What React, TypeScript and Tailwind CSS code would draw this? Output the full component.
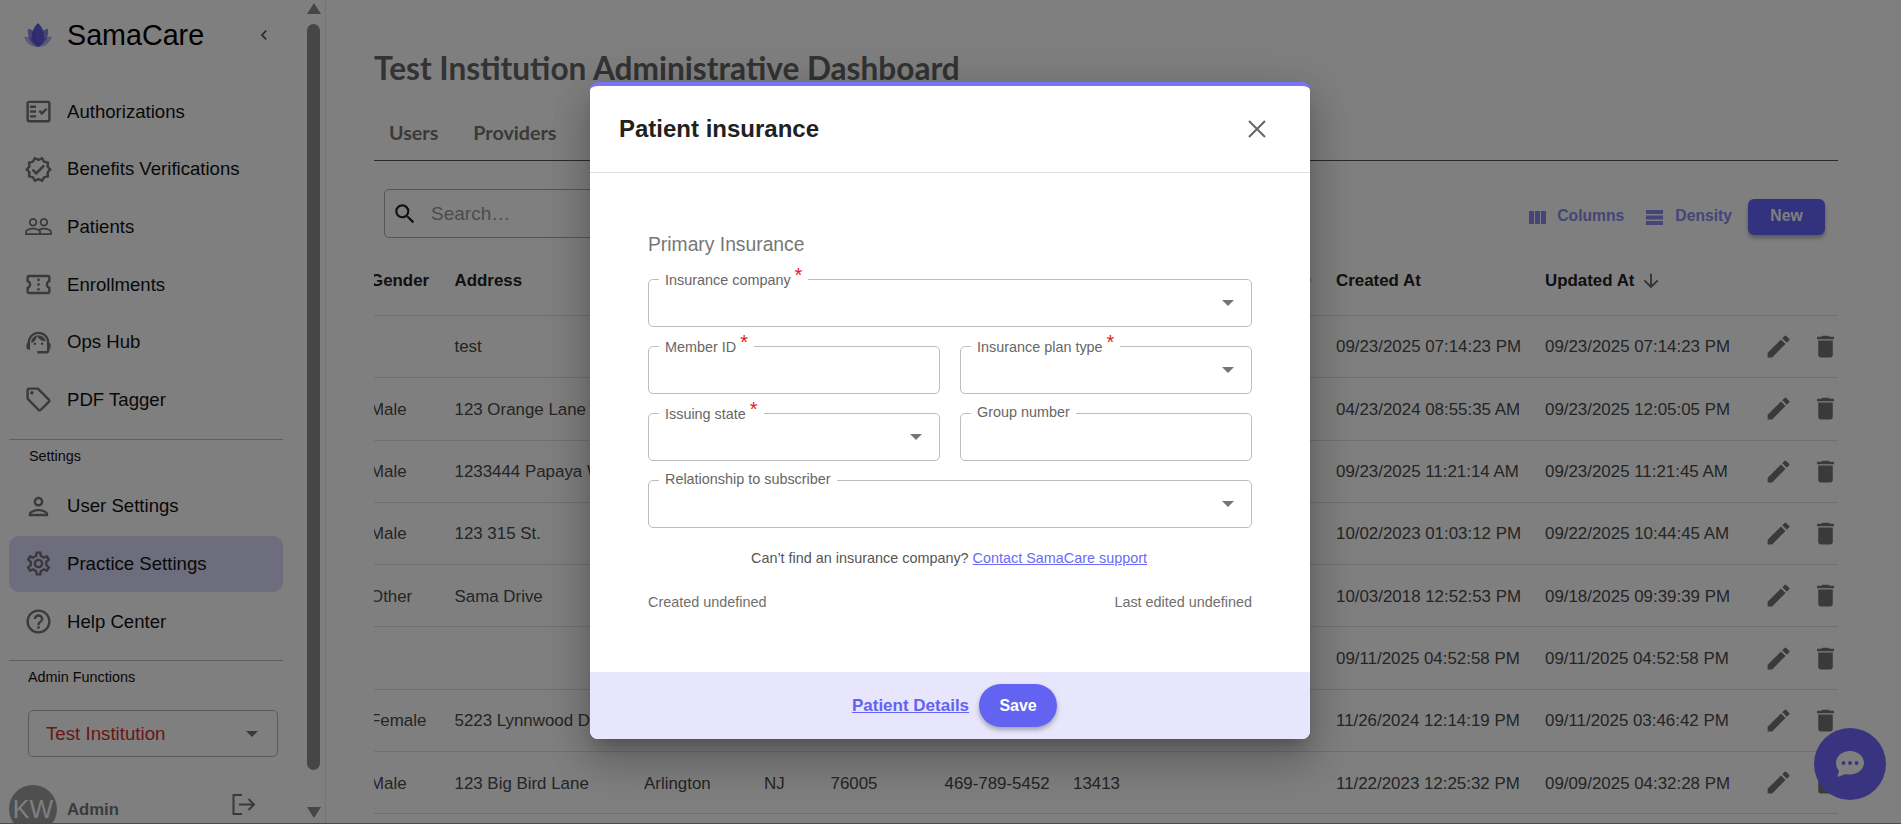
import { type ReactNode } from 'react'
import {
  MdArrowDownward,
  MdChevronLeft,
  MdDelete,
  MdEdit,
  MdHelpOutline,
  MdOutlineConfirmationNumber,
  MdOutlineFactCheck,
  MdOutlineLocalOffer,
  MdOutlinePerson,
  MdOutlineSettings,
  MdOutlineSupportAgent,
  MdOutlineVerified,
  MdPeopleOutline,
  MdSearch,
} from 'react-icons/md'

const tableCols = 'grid grid-cols-[84.5px_189.5px_120px_66.5px_114px_128.5px_263px_209px_219px_78px]'

const rows = [
  { gender: '', address: 'test', created: '09/23/2025 07:14:23 PM', updated: '09/23/2025 07:14:23 PM' },
  { gender: 'Male', address: '123 Orange Lane', created: '04/23/2024 08:55:35 AM', updated: '09/23/2025 12:05:05 PM' },
  { gender: 'Male', address: '1233444 Papaya Way', created: '09/23/2025 11:21:14 AM', updated: '09/23/2025 11:21:45 AM' },
  { gender: 'Male', address: '123 315 St.', created: '10/02/2023 01:03:12 PM', updated: '09/22/2025 10:44:45 AM' },
  { gender: 'Other', address: 'Sama Drive', created: '10/03/2018 12:52:53 PM', updated: '09/18/2025 09:39:39 PM' },
  { gender: '', address: '', created: '09/11/2025 04:52:58 PM', updated: '09/11/2025 04:52:58 PM' },
  { gender: 'Female', address: '5223 Lynnwood Dr', created: '11/26/2024 12:14:19 PM', updated: '09/11/2025 03:46:42 PM' },
  {
    gender: 'Male',
    address: '123 Big Bird Lane',
    city: 'Arlington',
    state: 'NJ',
    zip: '76005',
    phone: '469-789-5452',
    npi: '13413',
    created: '11/22/2023 12:25:32 PM',
    updated: '09/09/2025 04:32:28 PM',
  },
]

const Lotus = () => (
  <svg width="28" height="24" viewBox="0 0 28 24" fill="#5a55d8">
    <path opacity="0.45" d="M0 14c3-1 7 0 10 3l4 7c-6 0-11-3-14-10zM28 14c-3-1-7 0-10 3l-4 7c6 0 11-3 14-10z" />
    <path opacity="0.7" d="M4 6c3 0 6 2 8 5l2 13c-7-3-11-10-10-18zM24 6c-3 0-6 2-8 5l-2 13c7-3 11-10 10-18z" />
    <path opacity="0.95" d="M14 0c3 3 6 7 6 13 0 5-3 9-6 11-3-2-6-6-6-11 0-6 3-10 6-13z" />
  </svg>
)

const LogoutIcon = () => (
  <svg width="24" height="21" viewBox="0 0 24 21" fill="none" stroke="#757575" strokeWidth="2">
    <path d="M10 1H1.500v19H10" />
    <path d="M7 10.500h15M16.500 5l5.500 5.500-5.500 5.500" />
  </svg>
)

const ColumnsIcon = () => (
  <svg width="17" height="13" viewBox="0 0 17 13" fill="currentColor">
    <rect width="5" height="13" />
    <rect x="6" width="5" height="13" />
    <rect x="12" width="5" height="13" />
  </svg>
)

const DensityIcon = () => (
  <svg width="17" height="15" viewBox="0 0 17 15" fill="currentColor">
    <rect width="17" height="4" />
    <rect y="5.500" width="17" height="4" />
    <rect y="11" width="17" height="4" />
  </svg>
)

const NavItem = ({ icon, label, active }: { icon: ReactNode; label: string; active?: boolean }) => (
  <div className="flex h-[57.6px] items-center">
    <div className={`ml-[9px] flex h-[56px] w-[274px] items-center gap-[14px] rounded-[10px] pl-[15px] ${active ? 'bg-[#dbdbfa]' : ''}`}>
      <span className="text-[#757575]">{icon}</span>
      <span className="text-[18.6px] text-[#111]">{label}</span>
    </div>
  </div>
)

const Sidebar = () => (
  <aside className="flex h-full w-[326px] shrink-0 border-r border-[#e6e6e6]">
    <div className="w-[306px] shrink-0">
      <div className="flex h-[83px] items-start pl-[24px] pt-[17px]">
        <div className="mt-[6px]"><Lotus /></div>
        <span className="ml-[15px] text-[28.7px] leading-[36px] text-black">SamaCare</span>
        <MdChevronLeft size={20} className="ml-auto mr-[32px] mt-[8px] text-[#555]" />
      </div>
      <NavItem icon={<MdOutlineFactCheck size={29} />} label="Authorizations" />
      <NavItem icon={<MdOutlineVerified size={29} />} label="Benefits Verifications" />
      <NavItem icon={<MdPeopleOutline size={29} />} label="Patients" />
      <NavItem icon={<MdOutlineConfirmationNumber size={29} />} label="Enrollments" />
      <NavItem icon={<MdOutlineSupportAgent size={29} />} label="Ops Hub" />
      <NavItem icon={<MdOutlineLocalOffer size={29} />} label="PDF Tagger" />

      <div className="ml-[9px] mt-[10px] w-[274px] border-t border-[#bdbdbd]" />
      <div className="h-[38px] pl-[29px] pt-[6px] text-[14.4px] leading-[20px] text-[#111]">Settings</div>
      <NavItem icon={<MdOutlinePerson size={29} />} label="User Settings" />
      <NavItem icon={<MdOutlineSettings size={29} />} label="Practice Settings" active />
      <NavItem icon={<MdHelpOutline size={29} />} label="Help Center" />

      <div className="ml-[9px] mt-[10px] w-[274px] border-t border-[#bdbdbd]" />
      <div className="h-[49px] pl-[28px] pt-[6px] text-[14.4px] leading-[20px] text-[#111]">Admin Functions</div>

      <div className="ml-[28px] flex h-[47px] w-[250px] items-center justify-between rounded-[5px] border border-[#b5b5b5] pl-[17px] pr-[19px]">
        <span className="text-[18.7px] text-[#d32f2f]">Test Institution</span>
        <span className="h-0 w-0 border-x-[6px] border-t-[6px] border-x-transparent border-t-[#757575]" />
      </div>

      <div className="ml-[9px] mt-[28px] flex items-start">
        <div className="flex h-[48px] w-[48px] shrink-0 items-center justify-center rounded-full bg-[#9e9e9e] text-[25px] text-white">KW</div>
        <span className="ml-[10px] mt-[12px] text-[16.7px] font-bold text-[#777]">Admin</span>
        <span className="ml-[113px] mt-[9px]"><LogoutIcon /></span>
      </div>
    </div>

    <div className="flex h-full w-[15px] flex-col items-center">
      <span className="mt-[3px] h-0 w-0 border-x-[7px] border-b-[11px] border-x-transparent border-b-[#8c8c8c]" />
      <div className="mt-[10px] h-[746px] w-[13px] rounded-full bg-[#8c8c8c]" />
      <span className="mt-[37px] h-0 w-0 border-x-[7px] border-t-[11px] border-x-transparent border-t-[#8c8c8c]" />
    </div>
  </aside>
)

const Toolbar = () => (
  <div className="mt-[28px] flex items-start justify-between">
    <div className="ml-[10px] flex h-[49px] w-[300px] items-center rounded-[5px] border border-[#aaa] pl-[7px]">
      <MdSearch size={26} className="text-[#222]" />
      <span className="ml-[13px] pt-[2px] text-[19px] text-[#999]">Search…</span>
    </div>
    <div className="mr-[13px] mt-[10px] flex items-center text-[15.7px] font-bold text-[#8a8af0]">
      <ColumnsIcon />
      <span className="ml-[11px] pb-[2px]">Columns</span>
      <span className="ml-[22px]"><DensityIcon /></span>
      <span className="ml-[12px] pb-[2px]">Density</span>
      <button className="ml-[16px] h-[36px] w-[77px] rounded-[6px] bg-[#6464ff] pb-[2px] text-white shadow-[0_3px_4px_rgba(0,0,0,0.3)]">New</button>
    </div>
  </div>
)

const Table = () => (
  <div className="mt-[9px] overflow-hidden">
    <div className="-ml-[4px] w-[1472px] text-[16.9px] text-[#4a4a4a]">
      <div className={`${tableCols} h-[69px] items-center border-b border-[#e0e0e0] font-bold text-[#222]`}>
        <span>Gender</span>
        <span>Address</span>
        <span />
        <span />
        <span />
        <span />
        <span className="pr-[25px] text-right">ID</span>
        <span>Created At</span>
        <span className="flex items-center gap-[6px]">
          Updated At <MdArrowDownward size={22} className="text-[#666]" />
        </span>
      </div>
      {rows.map((row, i) => (
        <div key={i} className={`${tableCols} h-[62.3px] items-center border-b border-[#e0e0e0] pt-[1px]`}>
          <span>{row.gender}</span>
          <span className="whitespace-nowrap">{row.address}</span>
          <span>{row.city}</span>
          <span>{row.state}</span>
          <span>{row.zip}</span>
          <span>{row.phone}</span>
          <span>{row.npi}</span>
          <span>{row.created}</span>
          <span>{row.updated}</span>
          <span className="-mt-[1px] flex items-center gap-[18px] text-[#757575]">
            <MdEdit size={29} />
            <MdDelete size={29} />
          </span>
        </div>
      ))}
    </div>
  </div>
)

const Field = ({ label, required, select, className }: { label: string; required?: boolean; select?: boolean; className?: string }) => (
  <div className={`relative flex h-[48px] items-center justify-end rounded-[5px] border border-[#bdbdbd] pr-[17px] ${className ?? ''}`}>
    <span className={`absolute left-[10px] flex items-start bg-white px-[6px] text-[14.4px] leading-[18px] text-[#666] ${required ? '-top-[9px]' : '-top-[11px]'}`}>
      {label}
      {required ? <span className="relative -top-[5px] ml-[4px] text-[20px] leading-[18px] text-[#e01b1b]">*</span> : null}
    </span>
    {select ? <span className="h-0 w-0 border-x-[6px] border-t-[6px] border-x-transparent border-t-[#757575]" /> : null}
  </div>
)

const InsuranceModal = () => (
  <div className="absolute left-[590px] top-[82px] flex h-[657px] w-[720px] flex-col overflow-hidden rounded-[8px] border-t-[4px] border-[#7676f5] bg-white shadow-[0_11px_15px_-7px_rgba(0,0,0,0.2),0_24px_38px_3px_rgba(0,0,0,0.14),0_9px_46px_8px_rgba(0,0,0,0.12)]">
    <div className="flex h-[87px] shrink-0 items-center justify-between border-b border-[#dedede] pl-[29px] pr-[44px]">
      <span className="text-[24px] font-bold text-[#212121]">Patient insurance</span>
      <svg width="18" height="18" viewBox="0 0 18 18" stroke="#666" strokeWidth="2">
        <path d="M1 1l16 16M17 1L1 17" />
      </svg>
    </div>
    <div className="flex-1 px-[58px] pt-[60px]">
      <div className="text-[19.3px] leading-[24px] text-[#777]">Primary Insurance</div>
      <div className="mt-[22px] grid grid-cols-2 gap-x-[20px] gap-y-[19px]">
        <Field label="Insurance company" required select className="col-span-2" />
        <Field label="Member ID" required />
        <Field label="Insurance plan type" required select />
        <Field label="Issuing state" required select />
        <Field label="Group number" />
        <Field label="Relationship to subscriber" select className="col-span-2" />
      </div>
      <div className="mt-[20px] pr-[2px] text-center text-[14.4px] leading-[20px] text-[#555]">
        Can’t find an insurance company? <span className="text-[#6b6bf5] underline">Contact SamaCare support</span>
      </div>
      <div className="mt-[24px] flex justify-between text-[14.4px] leading-[20px] text-[#6f6f6f]">
        <span>Created undefined</span>
        <span>Last edited undefined</span>
      </div>
    </div>
    <div className="flex h-[67px] shrink-0 items-center justify-center gap-[10px] bg-[#e8e6fc] pl-[9px]">
      <span className="text-[17px] font-bold text-[#6363f1] underline">Patient Details</span>
      <button className="h-[43px] w-[78px] rounded-[22px] bg-[#6363f1] text-[16px] font-bold text-white shadow-[0_3px_5px_rgba(0,0,0,0.3)]">Save</button>
    </div>
  </div>
)

const ChatFab = () => (
  <div className="absolute bottom-[24px] right-[15px] flex h-[72px] w-[72px] items-center justify-center rounded-full bg-[#7268fe]">
    <svg width="28" height="26" viewBox="0 0 28 26" fill="white">
      <path d="M14 0c7.700 0 14 5.300 14 11.800S21.700 23.500 14 23.500c-1.500 0-3-.2-4.400-.6L1.500 26l1.400-6.300C1.100 17.700 0 15 0 11.800 0 5.300 6.300 0 14 0z" />
      <circle cx="7.500" cy="12" r="1.900" fill="#7268fe" />
      <circle cx="14" cy="12" r="1.900" fill="#7268fe" />
      <circle cx="20.500" cy="12" r="1.900" fill="#7268fe" />
    </svg>
  </div>
)

export default function App() {
  return (
    <div className="relative flex h-screen w-full overflow-hidden bg-white [font-family:'Liberation_Sans',Arial,sans-serif]">
      <Sidebar />
      <main className="min-w-0 flex-1 pl-[48px] pr-[63px] pt-[48px]">
        <h1 className="h-[40px] text-[31.6px] font-bold leading-[40px] text-[#666] [font-family:Lato,sans-serif]">
          Test Institution Administrative Dashboard
        </h1>
        <div className="mt-[18px] flex h-[55px] items-center gap-[35px] border-b border-[#555] pl-[15px] text-[19.7px] font-bold text-[#757575] [font-family:Lato,sans-serif]">
          <span>Users</span>
          <span>Providers</span>
        </div>
        <Toolbar />
        <Table />
      </main>
      <ChatFab />
      <div className="absolute inset-0 bg-black/50" />
      <InsuranceModal />
      <div className="absolute inset-x-0 bottom-0 h-px bg-[#7d2d5c]" />
    </div>
  )
}
